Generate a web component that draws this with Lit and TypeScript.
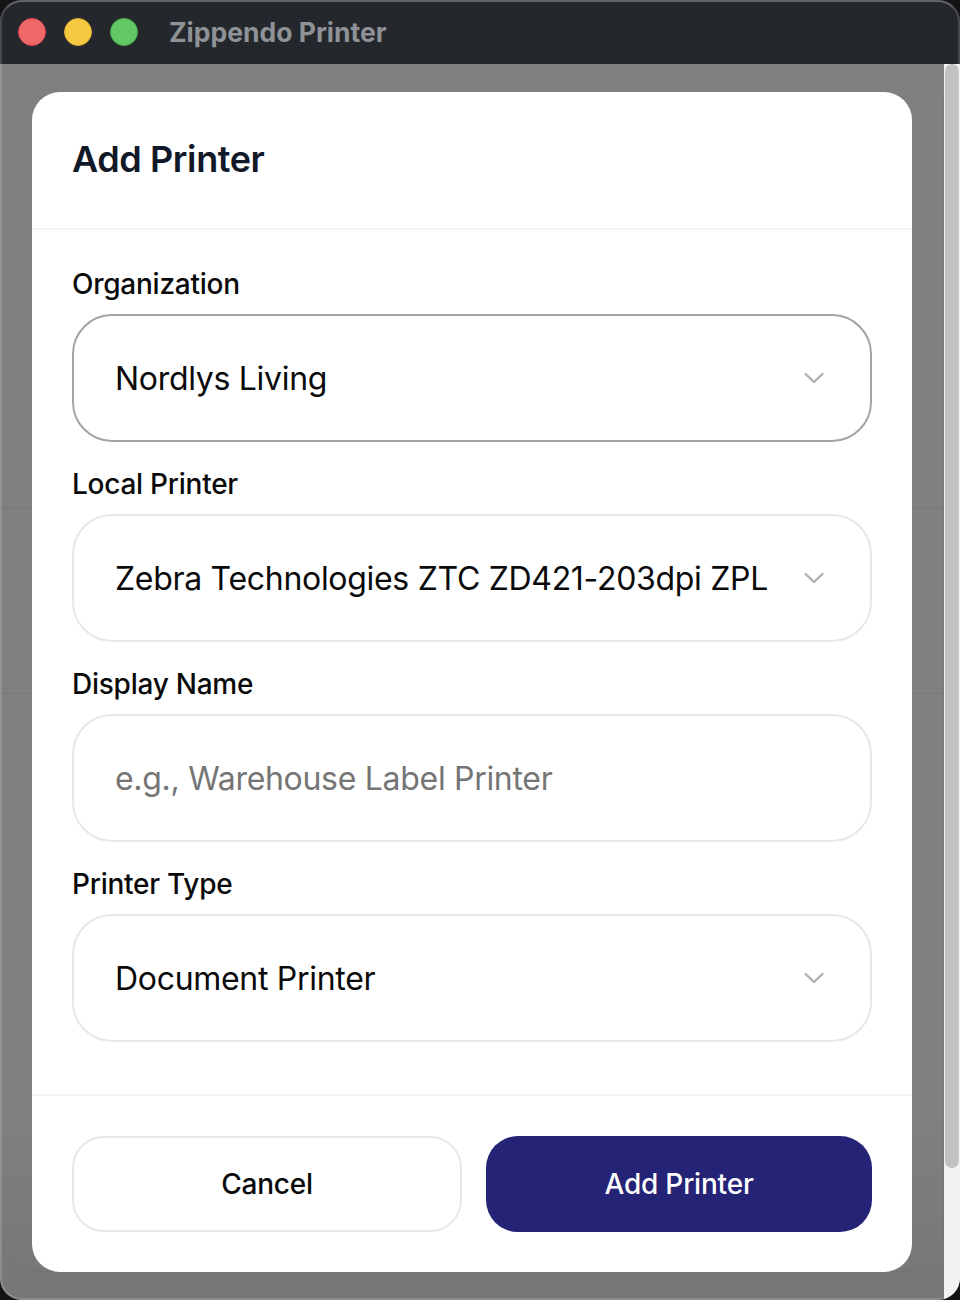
import { LitElement, html, css } from "lit";

const chevron = html`<svg class="chev" width="24" height="24" viewBox="0 0 24 24" fill="none" stroke="#b0b0b0" stroke-width="2.4" stroke-linecap="round" stroke-linejoin="round"><path d="M3.5 8 L12 16 L20.5 8"/></svg>`;

class AppRoot extends LitElement {
  static styles = css`
    :host { display: block; width: 960px; height: 1300px; background: #141414; font-family: Inter, "Liberation Sans", sans-serif; }
    .window { position: relative; width: 960px; height: 1300px; border-radius: 22px; overflow: hidden; display: flex; flex-direction: column; background: #808080; box-sizing: border-box; }
    .frame { position: absolute; inset: 0; border-radius: 22px; border: 2px solid rgba(255,255,255,0.16); border-top-color: rgba(255,255,255,0.28); box-sizing: border-box; pointer-events: none; z-index: 5; }
    .titlebar { height: 64px; flex: none; background: #24272c; display: flex; align-items: center; padding-left: 18px; box-sizing: border-box; }
    .light { width: 28px; height: 28px; border-radius: 50%; margin-right: 18px; box-sizing: border-box; }
    .red { background: #f1686a; border: 1px solid #dd4a4c; }
    .yellow { background: #f5c942; border: 1px solid #dcae2e; }
    .green { background: #62c765; border: 1px solid #4eae50; }
    .app-title { margin-left: 13px; font-size: 26.5px; font-weight: 700; color: #8f9297; line-height: 32px; }
    .content { flex: 1; display: flex; min-height: 0; }
    .backdrop { position: relative; width: 944px; flex: none; padding: 28px 32px; box-sizing: border-box; background: linear-gradient(180deg, #808080 0%, #808080 85%, #767676 100%); }
    .ghost { position: absolute; left: 2px; right: 0; top: 0; bottom: 28px; border: 1px solid rgba(0,0,0,0.035); border-radius: 32px; }
    .rule { position: absolute; left: 0; right: 0; height: 1px; background: rgba(0,0,0,0.05); }
    .rule.a { top: 443px; }
    .rule.b { top: 629px; }
    .scroll { width: 16px; flex: none; background: #f1f1f1; }
    .thumb { width: 14px; margin-left: 1px; height: 1104px; border-radius: 7px; background: #c1c1c1; }
    .modal { position: relative; background: #fff; border-radius: 28px; width: 880px; height: 1180px; display: flex; flex-direction: column; }
    .head { height: 138px; flex: none; box-sizing: border-box; padding-left: 40px; border-bottom: 2px solid #f3f4f6; display: flex; align-items: center; }
    h2 { margin: 0; font-size: 36px; line-height: 40px; font-weight: 600; color: #111827; position: relative; top: -1px; letter-spacing: -0.4px; }
    .body { flex: 1; padding: 36px 40px 0; box-sizing: border-box; display: flex; flex-direction: column; gap: 24px; }
    .field { display: flex; flex-direction: column; gap: 12px; }
    label { font-size: 28px; line-height: 36px; font-weight: 500; color: #0a0a0a; letter-spacing: -0.25px; }
    .control { height: 128px; box-sizing: border-box; border: 2px solid #e8e8ea; border-radius: 40px; padding: 0 44px 0 41px; display: flex; align-items: center; justify-content: space-between; font-size: 32px; color: #0a0a0a; letter-spacing: -0.3px; }
    .control.focus { border-color: #a3a3a3; }
    .placeholder { color: #757575; }
    .foot { height: 178px; flex: none; box-sizing: border-box; border-top: 2px solid #f3f4f6; padding: 40px 40px 40px; display: grid; grid-template-columns: 390px 386px; gap: 24px; }
    button { height: 96px; border-radius: 32px; font: inherit; font-size: 28px; font-weight: 500; letter-spacing: -0.2px; cursor: pointer; padding: 0; }
    .cancel { background: #fff; color: #0a0a0a; border: 2px solid #e8e8e8; }
    .add { background: #252375; color: #fff; border: none; }
  `;

  field(label: string, value: string, opts: { focus?: boolean; placeholder?: boolean } = {}) {
    return html`<div class="field">
      <label>${label}</label>
      <div class="control ${opts.focus ? "focus" : ""}">
        <span class=${opts.placeholder ? "placeholder" : ""}>${value}</span>
        ${opts.placeholder ? "" : chevron}
      </div>
    </div>`;
  }

  render() {
    return html`<div class="window">
      <div class="titlebar">
        <div class="light red"></div><div class="light yellow"></div><div class="light green"></div>
        <div class="app-title">Zippendo Printer</div>
      </div>
      <div class="content">
        <div class="backdrop">
          <div class="ghost"></div>
          <div class="rule a"></div>
          <div class="rule b"></div>
          <div class="modal">
            <div class="head"><h2>Add Printer</h2></div>
            <div class="body">
              ${this.field("Organization", "Nordlys Living", { focus: true })}
              ${this.field("Local Printer", "Zebra Technologies ZTC ZD421-203dpi ZPL")}
              ${this.field("Display Name", "e.g., Warehouse Label Printer", { placeholder: true })}
              ${this.field("Printer Type", "Document Printer")}
            </div>
            <div class="foot">
              <button class="cancel">Cancel</button>
              <button class="add">Add Printer</button>
            </div>
          </div>
        </div>
        <div class="scroll"><div class="thumb"></div></div>
      </div>
      <div class="frame"></div>
    </div>`;
  }
}
customElements.define("app-root", AppRoot);
